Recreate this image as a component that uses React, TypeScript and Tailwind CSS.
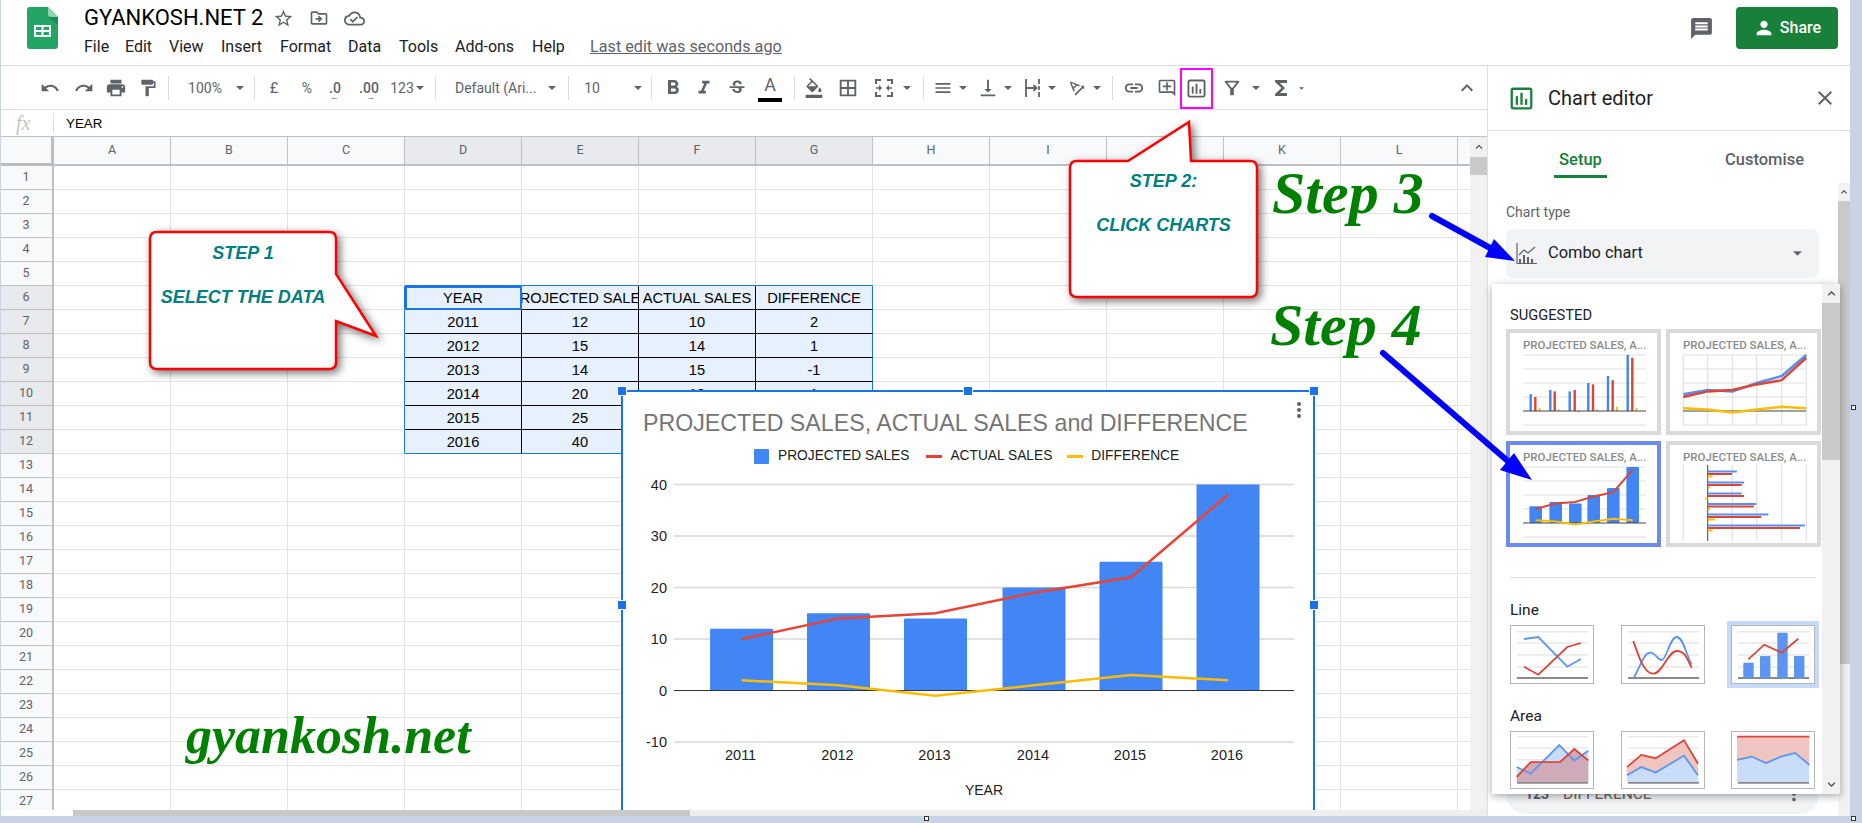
import React from "react";
import {
  MdUndo, MdRedo, MdPrint, MdFormatPaint, MdFormatBold, MdFormatItalic, MdStrikethroughS,
  MdFormatColorFill, MdBorderAll, MdMenu, MdVerticalAlignBottom, MdLink, MdOutlineAddComment,
  MdOutlineFilterAlt, MdFunctions, MdStarBorder, MdOutlineDriveFileMove, MdOutlineCloudDone, MdMessage, MdPerson, MdClose,
  MdExpandLess, MdExpandMore, MdTextRotationAngleup, MdMoreVert,
} from "react-icons/md";

const ROBOTO = "font-['Roboto',sans-serif]";
const ARIAL = "font-['Liberation_Sans',Arial,sans-serif]";
const SCRIPT = "font-['Liberation_Serif',serif] font-bold italic text-[#008000]";

const COLS = ["A", "B", "C", "D", "E", "F", "G", "H", "I", "J", "K", "L"];
const TABLE: string[][] = [
  ["YEAR", "PROJECTED SALES", "ACTUAL SALES", "DIFFERENCE"],
  ["2011", "12", "10", "2"],
  ["2012", "15", "14", "1"],
  ["2013", "14", "15", "-1"],
  ["2014", "20", "19", "1"],
  ["2015", "25", "22", "3"],
  ["2016", "40", "38", "2"],
];
const PROJECTED = [12, 15, 14, 20, 25, 40];
const ACTUAL = [10, 14, 15, 19, 22, 38];
const DIFF = [2, 1, -1, 1, 3, 2];

function T({ c, children }: { c: string; children?: React.ReactNode }) {
  return <div className={"flex h-full shrink-0 items-center justify-center text-[#5f6368] " + c}>{children}</div>;
}
function Caret({ c }: { c: string }) {
  return (
    <T c={c + " w-[12px]"}>
      <svg width="8" height="4" viewBox="0 0 8 4"><path d="M0 0h8L4 4z" fill="#5f6368" /></svg>
    </T>
  );
}
function Sep({ c }: { c: string }) {
  return <div className={"h-[24px] w-px shrink-0 bg-[#dadce0] " + c} />;
}

function Logo() {
  return (
    <svg width="31" height="42" viewBox="0 0 31 42">
      <path d="M3 0h18l10 10v29a3 3 0 0 1-3 3H3a3 3 0 0 1-3-3V3a3 3 0 0 1 3-3z" fill="#23a566" />
      <path d="M21 0l10 10h-7a3 3 0 0 1-3-3z" fill="#8ed1b1" />
      <path d="M21 10h10v8z" fill="#1c8a55" />
      <path fillRule="evenodd" d="M7 18h17v12H7zm2 2v3h5.5v-3zm7.500 0v3H22v-3zM9 25v3h5.500v-3zm7.500 0v3H22v-3z" fill="#fff" />
    </svg>
  );
}

function ChartGlyph({ color, size }: { color: string; size: number }) {
  return (
    <svg width={size} height={size} viewBox="0 0 20 20">
      <rect x="1.500" y="1.500" width="17" height="17" rx="1.500" fill="none" stroke={color} strokeWidth="2" />
      <rect x="5" y="8" width="2" height="7.500" fill={color} />
      <rect x="9" y="5" width="2" height="10.500" fill={color} />
      <rect x="13" y="10.500" width="2" height="5" fill={color} />
    </svg>
  );
}

function MergeGlyph() {
  return (
    <svg width="20" height="20" viewBox="0 0 20 20" fill="none" stroke="#5f6368" strokeWidth="2">
      <path d="M2 6V2h5M13 2h5v4M2 14v4h5M13 18h5v-4M2 9.500h0M18 9.500h0" />
      <path d="M2 10h5M5 8l2 2-2 2M18 10h-5M15 8l-2 2 2 2" strokeWidth="1.500" />
    </svg>
  );
}
function WrapGlyph() {
  return (
    <svg width="20" height="20" viewBox="0 0 20 20" fill="none" stroke="#5f6368" strokeWidth="1.800">
      <path d="M3 1v18M16 1v5M16 8v4M16 14v5M4 10h9M10.500 7l3 3-3 3" />
    </svg>
  );
}

function TopBar() {
  return (
    <div className="flex h-[66px] shrink-0 border-b border-[#dadce0]">
      <div className="ml-[27px] mt-[7px] shrink-0"><Logo /></div>
      <div className="ml-[26px] flex flex-col">
        <div className="mt-[5px] flex h-[26px] items-center">
          <span className={ROBOTO + " w-[189px] whitespace-nowrap text-[22px] leading-[26px] text-black"}>GYANKOSH.NET 2</span>
          <MdStarBorder size={21} className="text-[#5f6368]" />
          <MdOutlineDriveFileMove size={20} className="ml-[15px] text-[#5f6368]" />
          <MdOutlineCloudDone size={21} className="ml-[15px] text-[#5f6368]" />
        </div>
        <div className={ROBOTO + " mt-[5px] flex h-[22px] items-center whitespace-nowrap text-[16px] text-[#202124]"}>
          <span className="w-[41px]">File</span>
          <span className="w-[44px]">Edit</span>
          <span className="w-[52px]">View</span>
          <span className="w-[59px]">Insert</span>
          <span className="w-[68px]">Format</span>
          <span className="w-[51px]">Data</span>
          <span className="w-[56px]">Tools</span>
          <span className="w-[77px]">Add-ons</span>
          <span className="w-[58px]">Help</span>
          <span className="text-[16.200px] text-[#5f6368] underline">Last edit was seconds ago</span>
        </div>
      </div>
      <div className="ml-auto mt-[16px] text-[#5f6368]"><MdMessage size={25} /></div>
      <div className={ROBOTO + " ml-[22px] mr-[12px] mt-[7px] flex h-[42px] w-[102px] items-center justify-center gap-[5px] rounded-[4px] bg-[#188038] text-[16px] font-medium text-white"}>
        <MdPerson size={22} />
        <span>Share</span>
      </div>
    </div>
  );
}

function Toolbar() {
  return (
    <div className={ROBOTO + " flex h-[44px] shrink-0 items-center border-b border-[#dadce0] pl-[33px] pt-[1px] text-[14px]"}>
      <T c="w-[34px]"><MdUndo size={20} /></T>
      <T c="w-[34px]"><MdRedo size={20} /></T>
      <T c="w-[30px]"><MdPrint size={22} /></T>
      <T c="w-[34px]"><MdFormatPaint size={20} /></T>
      <Sep c="ml-[3px]" />
      <T c="ml-[18px] w-[36px]">100%</T>
      <Caret c="ml-[11px]" />
      <Sep c="ml-[8px]" />
      <T c="ml-[9px] w-[20px] text-[15px]">£</T>
      <T c="ml-[13px] w-[20px]">%</T>
      <T c="relative ml-[6px] w-[24px] font-medium">
        .0
        <span className="absolute left-[7px] top-[26px] text-[9px] leading-none">←</span>
      </T>
      <T c="relative ml-[8px] w-[28px] font-medium">
        .00
        <span className="absolute left-[11px] top-[26px] text-[9px] leading-none">→</span>
      </T>
      <T c="ml-[7px] w-[24px]">123</T>
      <Caret c="" />
      <Sep c="ml-[9px]" />
      <T c="ml-[19px] w-[81px] justify-start whitespace-nowrap">Default (Ari...</T>
      <Caret c="ml-[10px]" />
      <Sep c="ml-[10px]" />
      <T c="ml-[15px] w-[16px]">10</T>
      <Caret c="ml-[32px]" />
      <Sep c="ml-[7px]" />
      <T c="ml-[8px] w-[26px]"><MdFormatBold size={24} /></T>
      <T c="ml-[5px] w-[26px]"><MdFormatItalic size={22} /></T>
      <T c="ml-[7px] w-[26px]"><MdStrikethroughS size={20} /></T>
      <T c="relative ml-[7px] w-[26px]">
        <span className="mb-[6px] text-[18px] leading-none">A</span>
        <div className="absolute left-[1px] top-[31px] h-[4px] w-[24px] bg-black" />
      </T>
      <Sep c="ml-[11px]" />
      <T c="ml-[6px] w-[26px]"><MdFormatColorFill size={20} /></T>
      <T c="ml-[8px] w-[26px]"><MdBorderAll size={22} /></T>
      <T c="ml-[10px] w-[26px]"><MergeGlyph /></T>
      <Caret c="ml-[4px]" />
      <Sep c="ml-[10px]" />
      <T c="ml-[7px] w-[24px]"><MdMenu size={20} /></T>
      <Caret c="ml-[2px]" />
      <T c="ml-[7px] w-[24px]"><MdVerticalAlignBottom size={22} /></T>
      <Caret c="ml-[2px]" />
      <T c="ml-[7px] w-[24px]"><WrapGlyph /></T>
      <Caret c="ml-[1px]" />
      <T c="ml-[7px] w-[24px]"><MdTextRotationAngleup size={20} /></T>
      <Caret c="ml-[2px]" />
      <Sep c="ml-[9px]" />
      <T c="ml-[9px] w-[24px]"><MdLink size={22} /></T>
      <T c="ml-[9px] w-[24px]"><MdOutlineAddComment size={20} /></T>
      <div className="ml-[1px] flex h-[41px] w-[33px] shrink-0 items-center justify-center border-2 border-[#ff00ff]">
        <ChartGlyph color="#5f6368" size={19} />
      </div>
      <T c="ml-[7px] w-[24px]"><MdOutlineFilterAlt size={22} /></T>
      <Caret c="ml-[6px]" />
      <T c="ml-[7px] w-[24px]"><MdFunctions size={24} /></T>
      <T c="ml-[2px] w-[12px]"><svg width="5" height="3" viewBox="0 0 8 4"><path d="M0 0h8L4 4z" fill="#5f6368" /></svg></T>
      <T c="ml-auto mr-[8px] w-[24px]"><MdExpandLess size={26} /></T>
    </div>
  );
}

function FormulaBar() {
  return (
    <div className="flex h-[27px] shrink-0 items-center border-b border-[#c0c0c0]">
      <span className="ml-[16px] w-[37px] font-['Liberation_Serif',serif] text-[20px] italic leading-none text-[#c4c4c4]">fx</span>
      <div className="h-[21px] w-px bg-[#dadce0]" />
      <span className={ARIAL + " ml-[12px] pt-[1px] text-[13.330px] text-black"}>YEAR</span>
    </div>
  );
}

function Sheet() {
  const rows = Array.from({ length: 27 }, (_, i) => i + 1);
  return (
    <div className={ROBOTO + " grid h-full w-[1470px] grid-cols-[54px_repeat(12,117px)_12px] grid-rows-[29px_repeat(27,24px)] overflow-hidden"}>
      <div className="border-b-[3px] border-r-[3px] border-[#bdbdbd] bg-[#f8f9fa]" />
      {COLS.map((c, i) => (
        <div
          key={c}
          className={
            "flex items-center justify-center border-b-2 border-r border-[#c0c0c0] text-[12.500px] text-[#5f6368] " +
            (i >= 3 && i <= 6 ? "bg-[#e8eaed]" : "bg-[#f8f9fa]")
          }
        >
          {c}
        </div>
      ))}
      <div className="border-b-2 border-[#c0c0c0] bg-[#f8f9fa]" />
      {rows.map((r) => (
        <React.Fragment key={r}>
          <div
            className={
              "flex items-center justify-center border-b border-r-2 border-[#c0c0c0] text-[12.500px] text-[#5f6368] " +
              (r >= 6 && r <= 12 ? "bg-[#e8eaed]" : "bg-[#f8f9fa]")
            }
          >
            {r}
          </div>
          {COLS.map((_, ci) => {
            const inTable = r >= 6 && r <= 12 && ci >= 3 && ci <= 6;
            if (inTable) {
              const v = TABLE[r - 6][ci - 3];
              return (
                <div
                  key={ci}
                  className={
                    ARIAL +
                    " flex items-center justify-center overflow-hidden whitespace-nowrap border-b border-r bg-[#e7f0fd] text-[14.670px] text-black " +
                    (ci === 6 ? "border-r-[#1a73e8] " : "border-r-black ") +
                    (r === 12 ? "border-b-[#1a73e8] " : "border-b-black ") +
                    (r === 6 && ci === 3 ? "outline-2 -outline-offset-2 outline-[#1a73e8]" : "")
                  }
                >
                  <span className="shrink-0">{v}</span>
                </div>
              );
            }
            const leftOfTable = ci === 2 && r >= 6 && r <= 12;
            const aboveTable = r === 5 && ci >= 3 && ci <= 6;
            return (
              <div
                key={ci}
                className={
                  "border-b border-r " +
                  (leftOfTable ? "border-r-[#1a73e8] " : "border-r-[#e2e3e3] ") +
                  (aboveTable ? "border-b-[#1a73e8]" : "border-b-[#e2e3e3]")
                }
              />
            );
          })}
          <div className="border-b border-[#e2e3e3]" />
        </React.Fragment>
      ))}
    </div>
  );
}

function MainChart() {
  const y = (v: number) => 216.5 - 5.15 * v;
  const xs = [118.6, 215.5, 312.5, 411, 508, 605];
  const line = (d: number[]) => d.map((v, i) => `${xs[i]},${y(v)}`).join(" ");
  return (
    <div className={ARIAL + " absolute left-[621px] top-[390px] flex h-[420px] w-[694px] flex-col border-x-2 border-t-2 border-[#1a73e8] bg-white"}>
      <div className="whitespace-nowrap pl-[20px] pt-[16px] text-[23.200px] leading-[30px] text-[#757575]">
        PROJECTED SALES, ACTUAL SALES and DIFFERENCE
      </div>
      <div className="flex h-[36px] items-center whitespace-nowrap pl-[131px] text-[13.750px] text-[#222]">
        <div className="h-[15px] w-[15px] rounded-[1px] bg-[#4285f4]" />
        <span className="ml-[9px]">PROJECTED SALES</span>
        <div className="ml-[17px] h-[3px] w-[16px] bg-[#ea4335]" />
        <span className="ml-[8px]">ACTUAL SALES</span>
        <div className="ml-[15px] h-[3px] w-[16px] bg-[#fbbc04]" />
        <span className="ml-[8px]">DIFFERENCE</span>
      </div>
      <svg width="690" height="336" viewBox="0 0 690 336">
        {[40, 30, 20, 10, -10].map((v) => (
          <line key={v} x1="51" x2="671" y1={y(v)} y2={y(v)} stroke="#d9d9d9" strokeWidth="1.500" />
        ))}
        {[40, 30, 20, 10, 0, -10].map((v) => (
          <text key={v} x="44" y={y(v)} textAnchor="end" dominantBaseline="central" fontSize="14.500" fill="#222">{v}</text>
        ))}
        {PROJECTED.map((v, i) => (
          <rect key={i} x={xs[i] - 31.5} y={y(v)} width="63" height={5.15 * v} rx="1" fill="#4285f4" />
        ))}
        <line x1="51" x2="671" y1={y(0)} y2={y(0)} stroke="#333" strokeWidth="1.200" />
        <polyline points={line(ACTUAL)} fill="none" stroke="#ea4335" strokeWidth="2.500" />
        <polyline points={line(DIFF)} fill="none" stroke="#fbbc04" strokeWidth="2.500" />
        {xs.map((x, i) => (
          <text key={i} x={x - 1} y="281" textAnchor="middle" dominantBaseline="central" fontSize="14.500" fill="#222">{2011 + i}</text>
        ))}
        <text x="361" y="316" textAnchor="middle" dominantBaseline="central" fontSize="14" fill="#222">YEAR</text>
      </svg>
      <div className="absolute right-[2px] top-[6px] text-[#5f6368]"><MdMoreVert size={24} /></div>
    </div>
  );
}

function Handle({ c }: { c: string }) {
  return <div className={"absolute h-[10px] w-[10px] border border-white bg-[#1a73e8] " + c} />;
}

function ThumbGrid({ vertical }: { vertical?: boolean }) {
  return (
    <g>
      {[2, 16, 30, 44, 72].map((v) => (
        <line key={v} x1="13" x2="136" y1={v} y2={v} stroke="#e0e0e0" strokeWidth="1.200" />
      ))}
      {vertical && [13.3, 37.7, 62.3, 86.7, 111.7, 136.3].map((v) => (
        <line key={v} x1={v} x2={v} y1="2" y2="72" stroke="#e0e0e0" strokeWidth="1.200" />
      ))}
    </g>
  );
}

const ty = (v: number) => 58 - 1.4 * v;

function Thumb({ selected, children }: { selected?: boolean; children: React.ReactNode }) {
  return (
    <div className={"h-[106px] w-[155px] border-4 bg-white " + (selected ? "border-[#6a8bf0]" : "border-[#dadada]")}>
      <div className={ROBOTO + " h-[20px] whitespace-nowrap pl-[13px] pt-[3px] text-[11.500px] font-medium leading-[18px] text-[#8a8a8a]"}>PROJECTED SALES, A...</div>
      <svg width="147" height="78" viewBox="0 0 147 78">{children}</svg>
    </div>
  );
}

function Thumbs() {
  const groupB = [20.7, 40.3, 59.7, 78.3, 98, 117.7];
  const groupR = [25.3, 44.7, 64.7, 83, 102.7, 122.3];
  const lx = [13.3, 37.7, 62.3, 86.7, 111.7, 136.3];
  const cx = [25.7, 45.7, 65.3, 83.7, 103.3, 122.7];
  const pl = (d: number[], xs: number[]) => d.map((v, i) => `${xs[i]},${ty(v)}`).join(" ");
  const rows = [7, 18, 29, 39.5, 50, 61];
  return (
    <div className="ml-[14px] mt-[5px] grid grid-cols-[155px_155px] gap-x-[5px] gap-y-[6px]">
      <Thumb>
        <ThumbGrid />
        {PROJECTED.map((v, i) => (
          <g key={i}>
            <rect x={groupB[i] - 1.2} y={ty(v)} width="2.400" height={1.4 * v} fill="#4285f4" />
            <rect x={groupR[i] - 1.2} y={ty(ACTUAL[i])} width="2.400" height={1.4 * ACTUAL[i]} fill="#db4437" />
            <rect x={groupR[i] + 3.2} y={DIFF[i] > 0 ? ty(DIFF[i]) : 58} width="2" height={Math.abs(DIFF[i]) * 1.4} fill="#fbbc04" />
          </g>
        ))}
        <line x1="13" x2="136" y1="58" y2="58" stroke="#444" strokeWidth="1" />
      </Thumb>
      <Thumb>
        <ThumbGrid vertical />
        <line x1="13" x2="136" y1="58" y2="58" stroke="#444" strokeWidth="1" />
        <polyline points={pl(PROJECTED, lx)} fill="none" stroke="#5b8def" strokeWidth="2.500" />
        <polyline points={pl(ACTUAL, lx)} fill="none" stroke="#db4437" strokeWidth="2.500" />
        <polyline points={pl(DIFF, lx)} fill="none" stroke="#fbbc04" strokeWidth="2.500" />
      </Thumb>
      <Thumb selected>
        <ThumbGrid />
        {PROJECTED.map((v, i) => (
          <rect key={i} x={cx[i] - 6.3} y={ty(v)} width="12.600" height={1.4 * v} rx="1" fill="#4285f4" />
        ))}
        <line x1="13" x2="136" y1="58" y2="58" stroke="#444" strokeWidth="1" />
        <polyline points={pl(ACTUAL, cx)} fill="none" stroke="#db4437" strokeWidth="2" />
        <polyline points={pl(DIFF, cx)} fill="none" stroke="#fbbc04" strokeWidth="2" />
      </Thumb>
      <Thumb>
        {[13.3, 62.3, 86.7, 111.7, 136.3].map((v) => (
          <line key={v} x1={v} x2={v} y1="0" y2="76" stroke="#e0e0e0" strokeWidth="1.200" />
        ))}
        <line x1="37.7" x2="37.7" y1="0" y2="76" stroke="#444" strokeWidth="1" />
        {rows.map((r, i) => (
          <g key={i}>
            <rect x="37.7" y={r - 1.5} width={PROJECTED[i] * 2.43} height="2" fill="#5b8def" />
            <rect x="37.7" y={r + 1} width={ACTUAL[i] * 2.43} height="2" fill="#db4437" />
            <rect x={DIFF[i] < 0 ? 35.3 : 37.7} y={r + 3.5} width={Math.abs(DIFF[i]) * 2.43} height="2" fill="#fbbc04" />
          </g>
        ))}
      </Thumb>
    </div>
  );
}

function Small({ selected, children }: { selected?: boolean; children: React.ReactNode }) {
  return (
    <div className={"h-full w-[84px] border border-[#b5b5b5] bg-white " + (selected ? "outline-4 outline-[#c6dafc]" : "")}>
      <svg width="82" height="100%" viewBox="1 1 82 57" preserveAspectRatio="none">
        {children}
      </svg>
    </div>
  );
}

function SmGrid({ ys, bottom }: { ys: number[]; bottom: number }) {
  return (
    <g>
      {ys.map((v) => (
        <line key={v} x1="7" x2="78" y1={v} y2={v} stroke="#e8e8e8" strokeWidth="1.500" />
      ))}
      <line x1="7" x2="78" y1={bottom} y2={bottom} stroke="#8a8a8a" strokeWidth="2" />
    </g>
  );
}

const B = "#5b95f0";
const R = "#db4437";

function Gallery() {
  return (
    <div className={ROBOTO + " flex h-full flex-col"}>
      <div className="box-content h-[18px] pl-[18px] pt-[22px] text-[14.700px] leading-[18px] text-[#202124]">SUGGESTED</div>
      <Thumbs />
      <div className="ml-[18px] mt-[30px] h-px w-[306px] bg-[#e0e0e0]" />
      <div className="ml-[18px] mt-[23px] h-[18px] text-[15.500px] leading-[18px] text-[#202124]">Line</div>
      <div className="ml-[18px] mt-[6px] flex h-[59px] gap-x-[27px]">
        <Small>
          <SmGrid ys={[6.7, 18, 30, 42]} bottom={53} />
          <polyline points="14,14 28.3,12 57.3,41.700 71,34" fill="none" stroke={B} strokeWidth="1.800" />
          <polyline points="14,41.700 28.3,49.700 57.3,22 71,18" fill="none" stroke={R} strokeWidth="1.800" />
        </Small>
        <Small>
          <SmGrid ys={[6.7, 18, 30, 42]} bottom={53} />
          <path d="M13 52.700C20 40 23 27.700 29 27.700S36 35 40.700 35 49 12 55.700 12 65 30 70.700 39.300" fill="none" stroke={B} strokeWidth="1.800" />
          <path d="M12.300 16C18 32 23 48.700 32.300 48.700S47 26 55.700 26 66 34 70.700 42.700" fill="none" stroke={R} strokeWidth="1.800" />
        </Small>
        <div className="ml-[-1px]">
          <Small selected>
            <SmGrid ys={[6.7, 18, 30, 42]} bottom={53} />
            <rect x="12.300" y="37.700" width="10.400" height="15.300" rx="1" fill={B} />
            <rect x="29" y="31" width="10.400" height="22" rx="1" fill={B} />
            <rect x="46.300" y="7.700" width="10.400" height="45.300" rx="1" fill={B} />
            <rect x="63" y="31" width="10.400" height="22" rx="1" fill={B} />
            <polyline points="17.300,34.300 33.300,19.700 50.700,27.700 67.300,13.700" fill="none" stroke={R} strokeWidth="1.800" />
          </Small>
        </div>
      </div>
      <div className="ml-[18px] mt-[23px] h-[18px] text-[15.500px] leading-[18px] text-[#202124]">Area</div>
      <div className="ml-[18px] mt-[6px] flex h-[58px] gap-x-[27px]">
        <Small>
          <SmGrid ys={[5.7, 17.3, 29.3, 41]} bottom={52.7} />
          <polygon points="6.700,36.700 20.700,43.300 49.300,14.300 64.300,30 78.300,20 78.300,52 6.700,52" fill="#c9dcf8" />
          <polygon points="6.700,46.700 20.700,31.700 50,31.700 64.300,18.300 78.300,30 78.300,52 6.700,52" fill="#cfaab8" />
          <polyline points="6.700,36.700 20.700,43.300 49.300,14.300 64.300,30 78.300,20" fill="none" stroke={B} strokeWidth="1.800" />
          <polyline points="6.700,46.700 20.700,31.700 50,31.700 64.300,18.300 78.300,30" fill="none" stroke={R} strokeWidth="1.800" />
        </Small>
        <Small>
          <SmGrid ys={[5.7, 17.3, 29.3, 41]} bottom={52.7} />
          <polygon points="6,36.700 20.300,24.300 34.700,27.700 63,9.300 77,33.300 77,45 63,25 34.700,42.300 20.300,36.700 6,45" fill="#f1c5bf" />
          <polygon points="6,45 20.300,36.700 34.700,42.300 63,25 77,45 77,52 6,52" fill="#c9dcf8" />
          <polyline points="6,36.700 20.300,24.300 34.700,27.700 63,9.300 77,33.300" fill="none" stroke={R} strokeWidth="1.800" />
          <polyline points="6,45 20.300,36.700 34.700,42.300 63,25 77,45" fill="none" stroke={B} strokeWidth="1.800" />
        </Small>
        <div className="ml-[-1px]">
          <Small>
            <SmGrid ys={[5.7, 17.3, 29.3, 41]} bottom={52.7} />
            <polygon points="6,5.700 78.300,5.700 78.300,34.300 64,22.300 50,26 35,32.700 20.700,26 6,29.300" fill="#f1c5bf" />
            <polygon points="6,29.300 20.700,26 35,32.700 50,26 64,22.300 78.300,34.300 78.300,52 6,52" fill="#c9dcf8" />
            <line x1="6" x2="78.300" y1="5.700" y2="5.700" stroke={R} strokeWidth="1.800" />
            <polyline points="6,29.300 20.700,26 35,32.700 50,26 64,22.300 78.300,34.300" fill="none" stroke={B} strokeWidth="1.800" />
          </Small>
        </div>
      </div>
    </div>
  );
}

function Panel() {
  return (
    <div className={ROBOTO + " relative flex w-[363px] shrink-0 flex-col border-l border-[#e0e0e0] bg-white"}>
      <div className="flex h-[65px] shrink-0 items-center border-b border-[#dadce0]">
        <div className="ml-[22px]"><ChartGlyph color="#188038" size={23} /></div>
        <span className="ml-[15px] text-[20px] text-[#202124]">Chart editor</span>
        <div className="ml-auto mr-[13px] text-[#5f6368]"><MdClose size={24} /></div>
      </div>
      <div className="flex h-[52px] shrink-0 whitespace-nowrap text-[16.500px] font-medium">
        <div className="ml-[66px] flex w-[53px] flex-col items-center">
          <span className="mt-[19px] h-[20px] leading-[20px] text-[#188038]">Setup</span>
          <div className="mt-[5px] h-[3px] w-[53px] bg-[#188038]" />
        </div>
        <span className="ml-[118px] mt-[19px] h-[20px] leading-[20px] text-[#5f6368]">Customise</span>
      </div>
      <div className="flex min-h-0 flex-1">
        <div className="flex w-[351px] flex-col pl-[18px]">
          <span className="mt-[20px] h-[18px] text-[14px] leading-[18px] text-[#5f6368]">Chart type</span>
          <div className="mt-[8px] flex h-[49px] w-[313px] items-center rounded-[7px] bg-[#f1f3f4]">
            <svg className="ml-[10px]" width="21" height="21" viewBox="0 0 21 21" fill="none" stroke="#5f6368" strokeWidth="1.200">
              <path d="M1 0v20.500h20" />
              <path d="M3 12l5-5 4 3 7-6" />
              <path d="M4 20v-4M8 20v-8M12 20v-6M16 20v-4" strokeWidth="2" />
            </svg>
            <span className="ml-[11px] text-[16.400px] text-[#202124]">Combo chart</span>
            <svg className="ml-auto mr-[17px]" width="9" height="5" viewBox="0 0 8 4"><path d="M0 0h8L4 4z" fill="#5f6368" /></svg>
          </div>
          <div className="mt-[502px] flex h-[34px] w-[313px] shrink-0 items-start rounded-b-[20px] bg-[#f1f3f4] text-[#5f6368]">
            <span className="ml-[19px] w-[38px] text-[14px] font-bold leading-[28px]">123</span>
            <span className="text-[15.500px] leading-[28px]">DIFFERENCE</span>
            <div className="ml-auto mr-[14px] mt-[3px]"><MdMoreVert size={22} /></div>
          </div>
        </div>
        <div className="flex w-[12px] flex-col bg-[#f1f1f1]">
          <div className="flex h-[18px] items-center justify-center text-[#444]"><MdExpandLess size={12} /></div>
          <div className="h-[463px] bg-[#c9c9c9]" />
        </div>
      </div>
      <div className="absolute left-[4px] top-[218px] flex h-[510px] w-[348px] bg-white shadow-[0_2px_8px_rgba(0,0,0,0.35)]">
        <div className="w-[330px]"><Gallery /></div>
        <div className="flex w-[18px] flex-col bg-[#f1f1f1]">
          <div className="flex h-[19px] items-center justify-center text-[#444]"><MdExpandLess size={15} /></div>
          <div className="h-[157px] bg-[#c9c9c9]" />
          <div className="mt-auto flex h-[19px] items-center justify-center text-[#444]"><MdExpandMore size={15} /></div>
        </div>
      </div>
    </div>
  );
}

function Callout1() {
  return (
    <div className={ARIAL + " absolute left-[150px] top-[232px] h-[137px] w-[186px]"}>
      <svg className="absolute left-0 top-0 overflow-visible drop-shadow-[3px_3px_4px_rgba(0,0,0,0.55)]" width="186" height="137" viewBox="0 0 186 137">
        <path d="M7 0H179Q186 0 186 7V42L226 104L186 89V130Q186 137 179 137H7Q0 137 0 130V7Q0 0 7 0Z" fill="#fff" stroke="#ff0000" strokeWidth="2.500" />
      </svg>
      <div className="relative flex flex-col items-center pt-[10px] text-[18px] font-bold italic leading-[22px] text-[#008080]">
        <span>STEP 1</span>
        <span className="h-[22px]" />
        <span>SELECT THE DATA</span>
      </div>
    </div>
  );
}

function Callout2() {
  return (
    <div className={ARIAL + " absolute left-[1070px] top-[161px] h-[136px] w-[187px]"}>
      <svg className="absolute left-0 top-0 overflow-visible drop-shadow-[3px_3px_4px_rgba(0,0,0,0.55)]" width="187" height="136" viewBox="0 0 187 136">
        <path d="M7 0H58L119 -39L121 0H180Q187 0 187 7V129Q187 136 180 136H7Q0 136 0 129V7Q0 0 7 0Z" fill="#fff" stroke="#ff0000" strokeWidth="2.500" />
      </svg>
      <div className="relative flex flex-col items-center pt-[9px] text-[18px] font-bold italic leading-[22px] text-[#008080]">
        <span>STEP 2:</span>
        <span className="h-[22px]" />
        <span>CLICK CHARTS</span>
      </div>
    </div>
  );
}

export default function App() {
  return (
    <div className="relative flex h-[823px] w-[1862px] flex-col overflow-hidden bg-[#c8d4e6]">
      <div className="flex h-[816px] shrink-0">
        <div className="flex w-[1850px] shrink-0 flex-col bg-white">
          <TopBar />
          <div className="flex min-h-0 flex-1">
            <div className="flex w-[1487px] shrink-0 flex-col">
              <Toolbar />
              <FormulaBar />
              <div className="flex min-h-0 flex-1">
                <Sheet />
                <div className="flex w-[17px] flex-col bg-[#f1f1f1]">
                  <div className="flex h-[20px] items-center justify-center text-[#444]"><MdExpandLess size={14} /></div>
                  <div className="h-[18px] bg-[#c9c9c9]" />
                </div>
              </div>
              <div className="flex h-[6px] shrink-0 bg-[#eeeeee]">
                <div className="w-[73px] bg-white" />
                <div className="w-[617px] bg-[#c9c9c9]" />
              </div>
            </div>
            <Panel />
          </div>
        </div>
        <div className="w-[12px] shrink-0" />
      </div>

      <div className="absolute left-0 top-0 h-[816px] w-px bg-[#c8d4e6]" />

      <Callout1 />
      <MainChart />
      <Handle c="left-[617px] top-[386px]" />
      <Handle c="left-[963px] top-[386px]" />
      <Handle c="left-[1309px] top-[386px]" />
      <Handle c="left-[617px] top-[600px]" />
      <Handle c="left-[1309px] top-[600px]" />
      <Callout2 />

      <div className={SCRIPT + " absolute left-[1272px] top-[158px] text-[60px] leading-[70px]"}>Step 3</div>
      <div className={SCRIPT + " absolute left-[1270px] top-[290px] text-[60px] leading-[70px]"}>Step 4</div>
      <div className={SCRIPT + " absolute left-[186px] top-[706px] text-[52px] leading-[60px]"}>gyankosh.net</div>

      <svg className="pointer-events-none absolute left-0 top-0" width="1862" height="823" viewBox="0 0 1862 823">
        <path d="M1432 216L1492 249" stroke="#0000ff" strokeWidth="6" strokeLinecap="round" />
        <polygon points="1515,261 1485,257 1494,239" fill="#0000ff" />
        <path d="M1383 353L1510 463" stroke="#0000ff" strokeWidth="6" strokeLinecap="round" />
        <polygon points="1532,480 1500,470 1514,453" fill="#0000ff" />
        <rect x="1851.500" y="405.500" width="4" height="4" fill="#fff" stroke="#333" />
        <rect x="924.500" y="816.500" width="4" height="4" fill="#fff" stroke="#333" />
        <rect x="1851.500" y="816.500" width="4" height="4" fill="#fff" stroke="#333" />
      </svg>
    </div>
  );
}
